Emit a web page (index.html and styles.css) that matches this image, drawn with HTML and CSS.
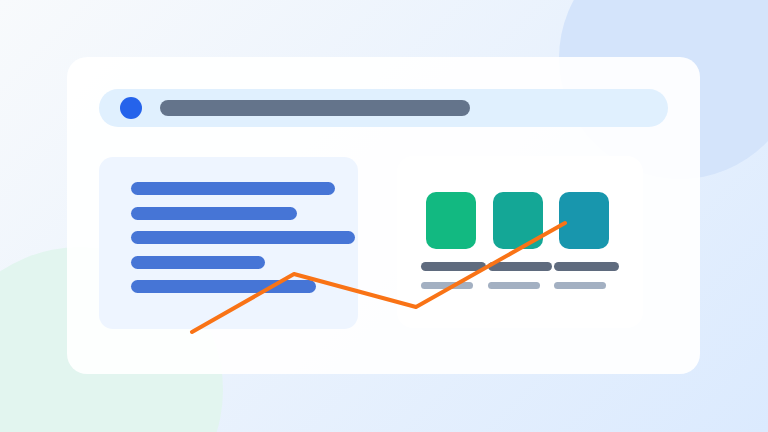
FILE: index.html
```html
<!DOCTYPE html>
<html lang="en">
<head>
<meta charset="utf-8">
<title>Dashboard illustration</title>
<link rel="stylesheet" href="styles.css">
</head>
<body>
<div class="stage">
  <div class="blob blob-blue"></div>
  <div class="blob blob-green"></div>
  <div class="card">
    <div class="search">
      <span class="dot"></span>
      <span class="query"></span>
    </div>
    <div class="panels">
      <div class="panel-text">
        <span class="line w1"></span>
        <span class="line w2"></span>
        <span class="line w3"></span>
        <span class="line w4"></span>
        <span class="line w5"></span>
      </div>
      <div class="panel-tiles">
        <div class="tile-col">
          <span class="tile t1"></span>
          <span class="label"></span>
          <span class="sub"></span>
        </div>
        <div class="tile-col">
          <span class="tile t2"></span>
          <span class="label"></span>
          <span class="sub"></span>
        </div>
        <div class="tile-col">
          <span class="tile t3"></span>
          <span class="label"></span>
          <span class="sub"></span>
        </div>
      </div>
    </div>
  </div>
  <svg class="trend" width="768" height="432" viewBox="0 0 768 432" aria-hidden="true">
    <polyline points="192,332 294,274 416,307 565,223" fill="none" stroke="#f97316" stroke-width="4" stroke-linecap="round" stroke-linejoin="round"/>
  </svg>
</div>
</body>
</html>
```

FILE: styles.css
```css
html, body {
  margin: 0;
  padding: 0;
}
body {
  width: 768px;
  height: 432px;
  overflow: hidden;
  font-family: "Inter", "Liberation Sans", sans-serif;
}
.stage {
  position: relative;
  width: 768px;
  height: 432px;
  overflow: hidden;
  box-sizing: border-box;
  padding: 57px 0 0 67px;
  background: linear-gradient(135deg, #f8fafc 0%, #dbeafe 100%);
}
.blob {
  position: absolute;
  border-radius: 50%;
}
.blob-blue {
  left: 559px;
  top: -63px;
  width: 242px;
  height: 242px;
  background: #d4e4fb;
}
.blob-green {
  left: -63px;
  top: 247px;
  width: 286px;
  height: 286px;
  background: #e2f5ef;
}
.card {
  position: relative;
  width: 633px;
  height: 317px;
  box-sizing: border-box;
  padding: 32px;
  border-radius: 20px;
  background: rgba(255, 255, 255, 0.92);
}
.search {
  display: flex;
  align-items: center;
  gap: 18px;
  height: 38px;
  padding-left: 21px;
  border-radius: 19px;
  background: #e0f0fe;
}
.dot {
  width: 22px;
  height: 22px;
  border-radius: 50%;
  background: #2563eb;
}
.query {
  width: 310px;
  height: 16px;
  border-radius: 8px;
  background: #64748b;
}
.panels {
  display: flex;
  align-items: flex-start;
  gap: 39px;
  margin-top: 30px;
}
.panel-text {
  display: flex;
  flex-direction: column;
  gap: 11.5px;
  width: 259px;
  height: 172px;
  box-sizing: border-box;
  padding: 25px 0 0 32px;
  border-radius: 14px;
  background: #eef5ff;
}
.line {
  display: block;
  height: 13px;
  border-radius: 7px;
  background: #4675d6;
}
.w1 { width: 204px; }
.w2 { width: 166px; }
.w3 { width: 224px; }
.w4 { width: 134px; }
.w5 { width: 185px; }
.panel-tiles {
  display: flex;
  gap: 2px;
  width: 246px;
  height: 172px;
  box-sizing: border-box;
  margin-top: -1px;
  padding: 36px 24px 0 24px;
  border-radius: 16px;
  background: #ffffff;
}
.tile-col {
  display: flex;
  flex-direction: column;
  width: 65px;
}
.tile {
  display: block;
  width: 50px;
  height: 57px;
  margin-left: 5px;
  border-radius: 10px;
}
.t1 { background: #12b981; }
.t2 { background: #14a796; }
.t3 { background: #1896ad; }
.label {
  display: block;
  height: 9px;
  margin-top: 13px;
  border-radius: 5px;
  background: #5f6b7e;
}
.sub {
  display: block;
  width: 52px;
  height: 7px;
  margin-top: 11px;
  border-radius: 4px;
  background: #a3b0c2;
}
.trend {
  position: absolute;
  left: 0;
  top: 0;
  pointer-events: none;
}
```
